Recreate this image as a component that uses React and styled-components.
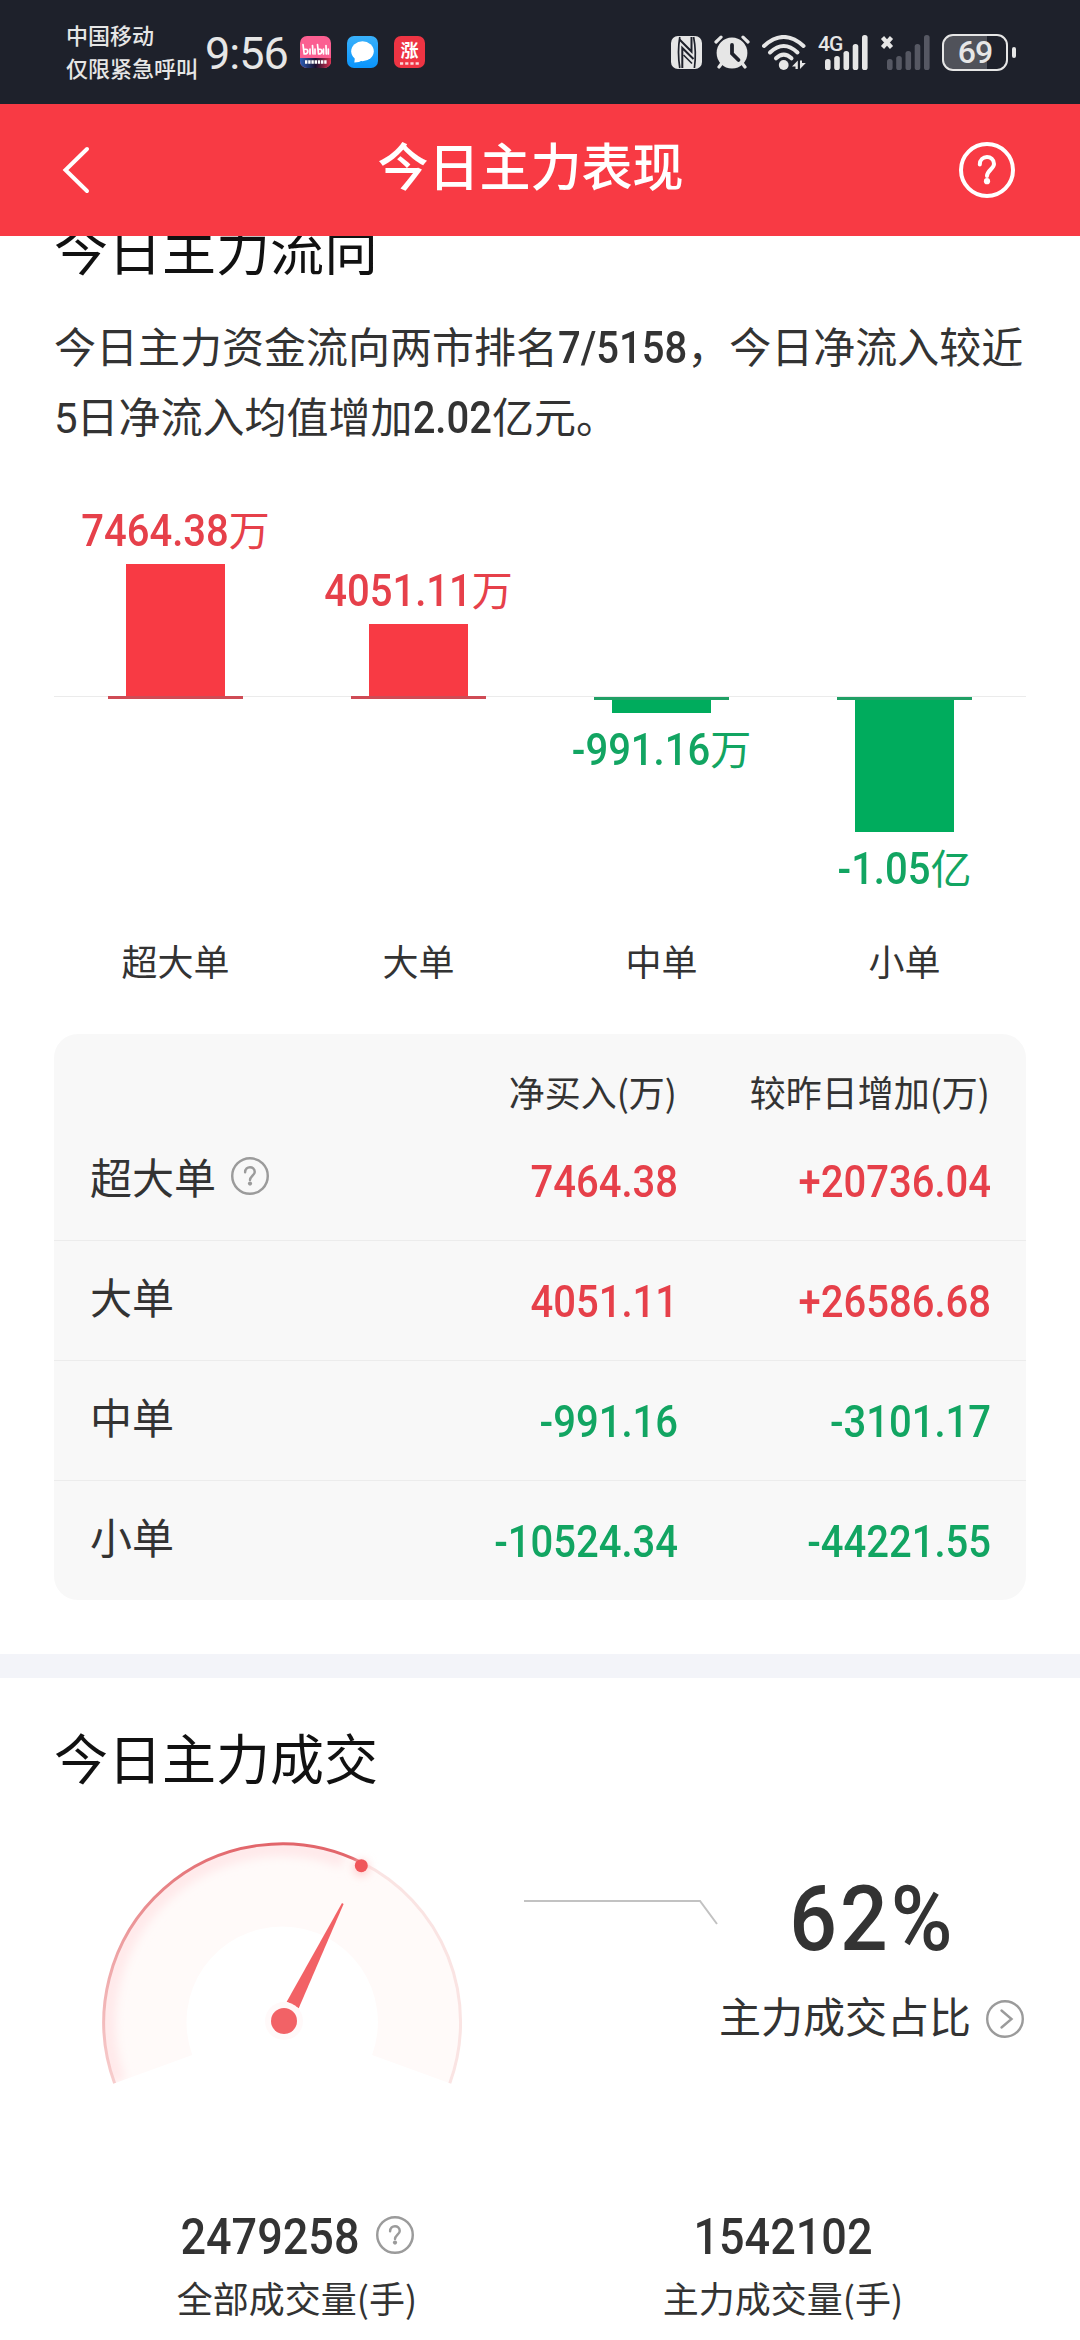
import React from 'react'
import styled, { createGlobalStyle } from 'styled-components'

const RED = '#f83a44'
const GREEN = '#00ac5d'
const CJK = `'Noto Sans CJK SC', sans-serif`

const orders = [
    { name: '超大单', amount: '7464.38', unit: '万', size: 132, net: '7464.38', change: '+20736.04', up: true, help: true },
    { name: '大单', amount: '4051.11', unit: '万', size: 72, net: '4051.11', change: '+26586.68', up: true },
    { name: '中单', amount: '-991.16', unit: '万', size: 13, net: '-991.16', change: '-3101.17', up: false },
    { name: '小单', amount: '-1.05', unit: '亿', size: 132, net: '-10524.34', change: '-44221.55', up: false },
]

const HelpIcon = ({ size, color, stroke }) => (
    <svg width={size} height={size} viewBox='0 0 56 56' fill='none' stroke={color} strokeWidth={stroke} strokeLinecap='round'>
        <circle cx='28' cy='28' r={28 - stroke / 2} />
        <path d='M20.8 22.5C20.8 12.6 35 12.6 35 22C35 26.6 28 28.6 28 34' />
        <circle cx='28' cy='39.2' r='3.1' fill={color} stroke='none' />
    </svg>
)

const BiliIcon = () => (
    <svg width='31' height='32' viewBox='0 0 31 32'>
        <defs>
            <clipPath id='bili'><rect width='31' height='32' rx='7' /></clipPath>
            <linearGradient id='biliBand'>
                <stop offset='0' stopColor='#2b5fb8' />
                <stop offset='0.5' stopColor='#1a1030' />
                <stop offset='1' stopColor='#e0304f' />
            </linearGradient>
        </defs>
        <g clipPath='url(#bili)'>
            <rect width='31' height='32' fill='#fb5f91' />
            <rect y='22' width='31' height='10' fill='url(#biliBand)' />
            <g fill='none' stroke='#fff' strokeWidth='1.7' strokeLinecap='round'>
                <path d='M3 8.5L4.2 18M4.2 13.5C9 12 9 18 4.2 18M10 13V18M12.5 9.5L13 18M15 13V18' />
                <path d='M17.5 8.5L18.5 18M18.5 13.5C23 12 23 18 18.5 18M23.5 13V18M26 9.5L26.3 18M28.3 13V18' />
            </g>
            <path d='M5 26H27' stroke='#fff' strokeWidth='3.6' strokeDasharray='2.4 0.8' />
        </g>
    </svg>
)

const MessageIcon = () => (
    <svg width='31' height='32' viewBox='0 0 31 32'>
        <defs>
            <linearGradient id='msg' x2='0' y2='1'>
                <stop offset='0' stopColor='#39b1fb' />
                <stop offset='1' stopColor='#0a94fb' />
            </linearGradient>
        </defs>
        <rect width='31' height='32' rx='7' fill='url(#msg)' />
        <ellipse cx='15.5' cy='15.3' rx='11.3' ry='10' fill='#fff' />
        <path d='M8 21L7.3 26.5Q12 26.6 16 24Z' fill='#fff' />
    </svg>
)

const StockIcon = () => (
    <svg width='31' height='32' viewBox='0 0 31 32'>
        <rect width='31' height='32' rx='7' fill='#ee3443' />
        <text x='15.5' y='21' textAnchor='middle' fontSize='18' fontWeight='700' fill='#fff' fontFamily='Noto Sans CJK SC'>涨</text>
        <path d='M6 27.5H25' stroke='#fff' strokeWidth='2.6' strokeDasharray='3.2 2' opacity='0.8' />
    </svg>
)

const NfcIcon = () => (
    <svg width='31' height='33' viewBox='0 0 31 33'>
        <rect width='31' height='33' rx='7' fill='#e6e6e6' />
        <g fill='none' stroke='#1e212b'>
            <path d='M8.8 1Q6.2 16 8.8 32M22.6 1Q25.6 16 23.4 32' strokeWidth='1.7' />
            <path d='M8.5 3.5L20.5 15.5V1' strokeWidth='2' />
            <path d='M11.3 32V12L22.5 23' strokeWidth='2' />
            <path d='M12.5 19L21 27.5' strokeWidth='1.6' />
        </g>
    </svg>
)

const AlarmIcon = () => (
    <svg width='36' height='34' viewBox='0 0 36 34'>
        <g stroke='#e6e6e6' strokeWidth='3.2' strokeLinecap='round'>
            <path d='M2 7L7 2.2M34 7L29 2.2M8 28L5 32M28 28L31 32' />
        </g>
        <circle cx='18' cy='18' r='15.4' fill='#e6e6e6' />
        <path d='M18 10V18.5L24.5 25' fill='none' stroke='#1e212b' strokeWidth='3.8' strokeLinecap='round' />
    </svg>
)

const WifiIcon = () => (
    <svg width='44' height='35' viewBox='0 0 44 35' fill='none' stroke='#e6e6e6' strokeWidth='4' strokeLinecap='round'>
        <path d='M2 11Q21.7 -7 41.5 11' />
        <path d='M8 17.5Q21.7 4.5 35.5 17.5' />
        <path d='M14 23.3Q21.7 16 29.5 23.3' />
        <circle cx='21.7' cy='30' r='4.9' fill='#e6e6e6' stroke='none' />
        <path d='M35.8 25.5V34H33.5V31.5H30ZM38 34V25.5H40V28H43.8Z' fill='#e6e6e6' stroke='none' />
    </svg>
)

const bars = [[0, 24, 11], [9.2, 21, 14], [18.5, 16, 19], [27.7, 9, 26], [37, 0, 35]]
const Signal = ({ color }) => (
    <svg width='43' height='35' viewBox='0 0 43 35' fill={color}>
        {bars.map(([x, y, h]) => <rect key={x} x={x} y={y} width='5.6' height={h} rx='2.6' />)}
    </svg>
)

const Gauge = () => (
    <svg width='460' height='320' viewBox='0 0 460 320' fill='none'>
        <defs>
            <linearGradient id='arc' gradientUnits='userSpaceOnUse' x1='60' y1='288' x2='190' y2='49'>
                <stop offset='0' stopColor='#f7cdcd' />
                <stop offset='0.45' stopColor='#eda0a2' />
                <stop offset='1' stopColor='#e2666b' />
            </linearGradient>
            <clipPath id='dial'>
                <path d='M60.6 288.3A178.3 178.3 0 1 1 395.8 288.3L318.1 260A95.7 95.7 0 1 0 138.3 260Z' />
            </clipPath>
            <filter id='soft' x='-20%' y='-20%' width='140%' height='140%'><feGaussianBlur stdDeviation='5' /></filter>
            <filter id='dotSoft' x='-100%' y='-100%' width='300%' height='300%'><feGaussianBlur stdDeviation='4' /></filter>
        </defs>
        <path d='M60.6 288.3A178.3 178.3 0 1 1 395.8 288.3L318.1 260A95.7 95.7 0 1 0 138.3 260Z' fill='#fffaf9' />
        <g clipPath='url(#dial)'>
            <path d='M63 287A175 175 0 0 1 290 64' stroke='#ffe9ea' strokeWidth='18' filter='url(#soft)' />
        </g>
        <path d='M308.6 68.1A178.3 178.3 0 0 1 395.8 288.3' stroke='#fae4e3' strokeWidth='3' />
        <path d='M60.6 288.3A178.3 178.3 0 0 1 308.6 68.1' stroke='url(#arc)' strokeWidth='3' />
        <circle cx='307.3' cy='73' r='8' fill='#ffd0d0' filter='url(#dotSoft)' />
        <circle cx='307.3' cy='70.7' r='6.5' fill='#f0565a' />
        <path d='M288 108L232.7 206.7L244.7 213.3L289.6 109Z' fill='#f26266' />
        <circle cx='230' cy='226' r='19' fill='#fff9f9' />
        <circle cx='230' cy='226' r='13' fill='#f26266' />
    </svg>
)

const App = () => {
    return (
        <>
            <GlobalStyle />
            <Screen>
                <StatusBar>
                    <Carrier>
                        <p>中国移动</p>
                        <p>仅限紧急呼叫</p>
                    </Carrier>
                    <Clock>9:56</Clock>
                    <AppIcons>
                        <BiliIcon />
                        <MessageIcon />
                        <StockIcon />
                    </AppIcons>
                    <SystemIcons>
                        <NfcIcon />
                        <AlarmIcon />
                        <WifiIcon />
                        <Network>
                            <Generation>4G</Generation>
                            <Signal color='#e6e6e6' />
                        </Network>
                        <Network>
                            <NoService width='14' height='15' viewBox='0 0 14 15'>
                                <path d='M2.5 2.5L11.5 12.5M11.5 2.5L2.5 12.5' stroke='#e6e6e6' strokeWidth='4.2' />
                            </NoService>
                            <Signal color='#565863' />
                        </Network>
                        <Battery>69</Battery>
                    </SystemIcons>
                </StatusBar>

                <Header>
                    <svg width='28' height='50' viewBox='0 0 28 50' fill='none' stroke='#fff' strokeWidth='4' strokeLinecap='round'>
                        <path d='M25 4L3.5 25L25 46' />
                    </svg>
                    <h1>今日主力表现</h1>
                    <HelpIcon size={56} color='#fff' stroke={4} />
                </Header>

                <Content>
                    <Section>
                        <Title $clipped>今日主力流向</Title>
                        <Summary>
                            今日主力资金流向两市排名<Num>7/5158</Num>，今日净流入较近<Thin>5</Thin>日净流入均值增加<Num>2.02</Num>亿元。
                        </Summary>
                        <Chart>
                            {orders.map(({ name, amount, unit, size, up }) => {
                                const label = <Amount $up={up}><Num>{amount}</Num>{unit}</Amount>
                                return (
                                    <Column key={name}>
                                        <Above>
                                            {up && label}
                                            {up && <Bar $up style={{ height: size }} />}
                                        </Above>
                                        <Below>
                                            <Base $up={up} />
                                            {!up && <Bar style={{ height: size }} />}
                                            {!up && label}
                                        </Below>
                                        <Category>{name}</Category>
                                    </Column>
                                )
                            })}
                        </Chart>
                        <Table>
                            <HeadRow>
                                <span />
                                <span>净买入(万)</span>
                                <span>较昨日增加(万)</span>
                            </HeadRow>
                            {orders.map(({ name, net, change, up, help }) => (
                                <Row key={name} $up={up}>
                                    <RowName>
                                        {name}
                                        {help && <HelpIcon size={38} color='#9b9b9b' stroke={3.6} />}
                                    </RowName>
                                    <Num>{net}</Num>
                                    <Num>{change}</Num>
                                </Row>
                            ))}
                        </Table>
                    </Section>

                    <Band />

                    <Section>
                        <Title>今日主力成交</Title>
                        <GaugeRow>
                            <Gauge />
                            <svg width='205' height='140' viewBox='0 0 205 140' fill='none' stroke='#c2c2c2' strokeWidth='2'>
                                <path d='M10 106H186L203 129' />
                            </svg>
                            <Ratio>
                                <Percent>62%</Percent>
                                <RatioLabel>
                                    主力成交占比
                                    <svg width='38' height='38' viewBox='0 0 38 38' fill='none' stroke='#9b9b9b' strokeWidth='2.4' strokeLinecap='round'>
                                        <circle cx='19' cy='19' r='17.8' />
                                        <path d='M15.5 10.5L25.5 19L15.5 27.5' />
                                    </svg>
                                </RatioLabel>
                            </Ratio>
                        </GaugeRow>
                        <Totals>
                            <Total>
                                <TotalValue>
                                    <Num $size={45}>2479258</Num>
                                    <HelpIcon size={38} color='#9b9b9b' stroke={3.6} />
                                </TotalValue>
                                <p>全部成交量(手)</p>
                            </Total>
                            <Total>
                                <TotalValue><Num $size={45}>1542102</Num></TotalValue>
                                <p>主力成交量(手)</p>
                            </Total>
                        </Totals>
                    </Section>
                </Content>
            </Screen>
        </>
    )
}

const GlobalStyle = createGlobalStyle`
    * {
        box-sizing: border-box;
        margin: 0;
        padding: 0;
    }
    body {
        background: #fff;
    }
    svg {
        display: block;
        flex-shrink: 0;
    }
`

const Screen = styled.div`
    display: flex;
    flex-direction: column;
    width: 1080px;
    height: 2340px;
    overflow: hidden;
    font-family: ${CJK};
    color: #333;
    background: #fff;
`

const StatusBar = styled.div`
    display: flex;
    align-items: center;
    height: 104px;
    padding: 0 65px 0 66px;
    background: #1e212b;
    color: #e6e6e6;
`

const Carrier = styled.div`
    width: 139px;
    padding-bottom: 3px;
    font-size: 22px;
    font-weight: 500;
    line-height: 33px;
    white-space: nowrap;
`

const Clock = styled.div`
    width: 95px;
    font-family: Roboto, sans-serif;
    font-size: 45px;
    line-height: 60px;
    letter-spacing: -1px;
    padding-top: 3px;
`

const AppIcons = styled.div`
    display: flex;
    gap: 16px;
`

const SystemIcons = styled.div`
    display: flex;
    align-items: center;
    gap: 12px;
    margin-left: auto;
`

const Network = styled.div`
    display: flex;
    align-items: flex-start;
`

const Generation = styled.span`
    width: 7px;
    font-family: Roboto, sans-serif;
    font-size: 21px;
    font-weight: 500;
    line-height: 18px;
    letter-spacing: -1px;
    white-space: nowrap;
`

const NoService = styled.svg`
    margin-right: -7px;
`

const Battery = styled.div`
    display: flex;
    align-items: center;
    justify-content: center;
    position: relative;
    width: 66px;
    height: 37px;
    margin-right: 7px;
    border: 2.5px solid #e6e6e6;
    border-radius: 11px;
    background: linear-gradient(90deg, #50525a 69%, transparent 69%);
    font-family: Roboto, sans-serif;
    font-size: 32px;
    font-weight: 500;
    line-height: 32px;
    letter-spacing: -1px;
    &::after {
        content: '';
        position: absolute;
        right: -10px;
        width: 4px;
        height: 11px;
        border-radius: 2px;
        background: #e6e6e6;
    }
`

const Header = styled.header`
    display: flex;
    align-items: center;
    justify-content: space-between;
    height: 132px;
    padding: 0 65px 0 62px;
    background: ${RED};
    color: #fff;
    h1 {
        font-size: 51px;
        font-weight: 500;
        line-height: 76px;
        padding: 0 0 12px 12px;
    }
`

const Content = styled.main`
    flex: 1;
    overflow: hidden;
`

const Section = styled.section`
    padding: 0 54px;
`

const Title = styled.h2`
    margin-top: ${({ $clipped }) => ($clipped ? '-26px' : '41px')};
    font-size: 54px;
    font-weight: 400;
    line-height: 76px;
    color: #111;
`

// tall, narrow figures: the glyphs are stretched upwards from the baseline
const Num = styled.span`
    display: inline-block;
    font-family: Roboto, sans-serif;
    font-size: ${({ $size }) => $size || 40}px;
    font-weight: 500;
    line-height: 1;
    transform: scaleY(1.09);
    transform-origin: 0 84%;
`

const Thin = styled.span`
    font-family: Roboto, sans-serif;
    line-height: 1;
    letter-spacing: -1px;
`

const Summary = styled.p`
    margin-top: 24px;
    margin-bottom: 1px;
    font-size: 42px;
    line-height: 70px;
    margin-right: -10px;
`

const Chart = styled.div`
    display: grid;
    grid-template-columns: repeat(4, 1fr);
`

const Column = styled.div`
    display: flex;
    flex-direction: column;
`

const Above = styled.div`
    display: flex;
    flex-direction: column;
    align-items: center;
    justify-content: flex-end;
    gap: 11px;
    height: 245px;
`

const Below = styled.div`
    display: flex;
    flex-direction: column;
    align-items: center;
    height: 240px;
    border-top: 1px solid #ebebeb;
`

const Base = styled.div`
    width: 135px;
    height: 3px;
    margin-top: ${({ $up }) => ($up ? '-1px' : '0')};
    background: ${({ $up }) => ($up ? '#cf4b55' : '#1fa065')};
`

const Bar = styled.div`
    width: 99px;
    background: ${({ $up }) => ($up ? RED : GREEN)};
`

const Amount = styled.p`
    font-size: 41px;
    line-height: 48px;
    white-space: nowrap;
    color: ${({ $up }) => ($up ? '#e6404a' : '#12a562')};
    ${Bar} + & {
        margin-top: 10px;
    }
`

const Category = styled.p`
    font-size: 36px;
    line-height: 48px;
    text-align: center;
`

const Table = styled.div`
    margin-top: 50px;
    border-radius: 24px;
    background: #f8f8f8;
`

const HeadRow = styled.div`
    display: grid;
    grid-template-columns: 1fr 260px 313px;
    height: 87px;
    padding: 27px 36px 0;
    font-size: 36px;
    line-height: 60px;
    text-align: right;
`

const Row = styled.div`
    display: grid;
    grid-template-columns: 1fr 260px 313px;
    align-items: center;
    height: 120px;
    padding: 2px 36px 0;
    border-bottom: 1px solid #ececec;
    text-align: right;
    color: ${({ $up }) => ($up ? '#e6404a' : '#12a562')};
    ${Num} {
        margin-top: 5px;
        margin-right: -1px;
    }
    &:last-child {
        height: 119px;
        border-bottom: 0;
    }
`

const RowName = styled.div`
    display: flex;
    align-items: center;
    gap: 15px;
    padding-bottom: 12px;
    font-size: 42px;
    line-height: 60px;
    color: #333;
`

const Band = styled.div`
    height: 24px;
    margin-top: 54px;
    background: #f3f4f9;
`

const GaugeRow = styled.div`
    display: flex;
    height: 320px;
`

const Ratio = styled.div`
    width: 307px;
    padding-top: 75px;
`

const Percent = styled.p`
    font-family: Roboto, sans-serif;
    font-size: 84px;
    font-weight: 500;
    line-height: 100px;
    letter-spacing: 3px;
    text-align: center;
    transform: scaleY(1.07);
`

const RatioLabel = styled.div`
    display: flex;
    align-items: center;
    gap: 15px;
    margin-top: 15px;
    font-size: 42px;
    line-height: 60px;
    svg {
        margin-top: 8px;
    }
`

const Totals = styled.div`
    display: grid;
    grid-template-columns: 1fr 1fr;
    margin-top: 91px;
`

const Total = styled.div`
    text-align: center;
    p {
        margin-top: 6px;
        font-size: 36px;
        line-height: 50px;
    }
`

const TotalValue = styled.div`
    display: flex;
    align-items: center;
    justify-content: center;
    gap: 16px;
    height: 60px;
    ${Num} {
        margin-top: 5px;
    }
    svg {
        margin-bottom: 2px;
    }
`

export default App
